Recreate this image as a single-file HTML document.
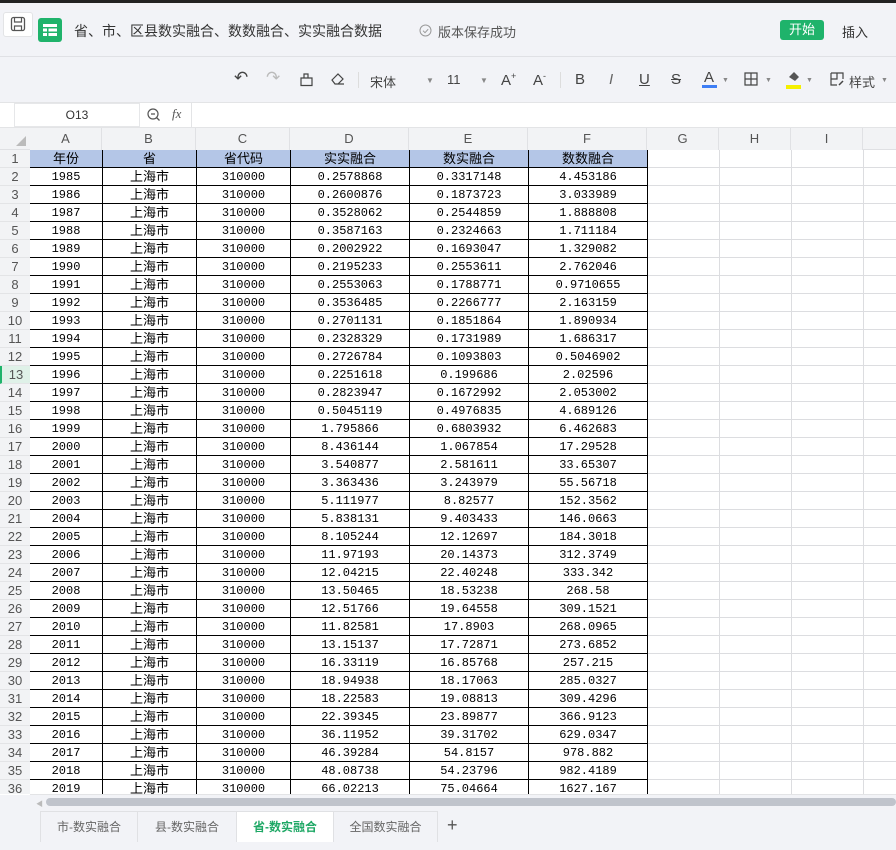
<!DOCTYPE html>
<html><head><meta charset="utf-8"><style>
*{margin:0;padding:0;box-sizing:border-box}
body{width:896px;height:850px;overflow:hidden;background:#f2f3f7;font-family:"Liberation Sans","Noto Sans CJK SC",sans-serif;position:relative;color:#333}
.abs{position:absolute}
.top{left:0;top:0;width:896px;height:3px;background:#222}
.tb{font-size:13px;color:#444}
table{border-collapse:collapse;table-layout:fixed;position:absolute;left:30px;top:150px;background:#fff;width:905px}
td{height:18px;max-height:18px;padding:0;text-align:center;font-family:"Liberation Mono","Noto Sans CJK SC",monospace;font-size:12px;color:#000;border:1px solid #dcdde0;white-space:nowrap;overflow:hidden;line-height:16px}
td.d{border:1px solid #000}
td.cn{font-family:"Liberation Sans","Noto Sans CJK SC",sans-serif;font-size:13px}
tr.h td.d{background:#b4c6e7;font-family:"Liberation Sans","Noto Sans CJK SC",sans-serif;font-size:13px}
.rh{position:absolute;left:0;width:30px;height:18px;font-size:13px;color:#555;text-align:center;line-height:18px;background:#f2f3f5;border-bottom:1px solid #e3e4e6}
.ch{position:absolute;top:128px;height:22px;font-size:13px;color:#555;text-align:center;line-height:22px;background:#f2f3f5;border-right:1px solid #e0e1e4}
.tab{position:absolute;top:812px;height:30px;font-size:12px;color:#666;line-height:30px;text-align:center;border-right:1px solid #e0e1e4;background:#f2f3f7}
</style></head><body>
<div class="abs top"></div>
<div class="abs" style="left:3px;top:12px;width:30px;height:25px;background:#fff;border:1px solid #e3e4e6;border-radius:3px"></div>
<svg class="abs" style="left:10px;top:16px" width="16" height="16" viewBox="0 0 16 16"><rect x="1.5" y="1.5" width="13" height="13" rx="2" fill="none" stroke="#555" stroke-width="1.3"/><path d="M4.5 2v4h7V2M4.5 14v-4h7v4" fill="none" stroke="#555" stroke-width="1.2"/></svg>
<div class="abs" style="left:38px;top:18px;width:24px;height:24px;background:#1fb36b;border-radius:3px"></div>
<svg class="abs" style="left:42px;top:22px" width="16" height="16" viewBox="0 0 16 16"><rect x="1" y="2" width="14" height="3" fill="#fff"/><rect x="1" y="6.5" width="4" height="3" fill="#fff"/><rect x="6.5" y="6.5" width="8.5" height="3" fill="#fff"/><rect x="1" y="11" width="4" height="3" fill="#fff"/><rect x="6.5" y="11" width="8.5" height="3" fill="#fff"/></svg>
<div class="abs" style="left:74px;top:21px;font-size:14px;color:#333">省、市、区县数实融合、数数融合、实实融合数据</div>
<svg class="abs" style="left:419px;top:24px" width="13" height="13"><circle cx="6.5" cy="6.5" r="5.5" fill="none" stroke="#999" stroke-width="1"/><path d="M4 6.7l2 2 3.2-3.5" fill="none" stroke="#999"/></svg>
<div class="abs" style="left:438px;top:22px;font-size:13px;color:#555">版本保存成功</div>
<div class="abs" style="left:780px;top:20px;width:44px;height:20px;background:#1fb36b;border-radius:3px;color:#fff;font-size:13px;text-align:center;line-height:20px">开始</div>
<div class="abs" style="left:842px;top:22px;font-size:13px;color:#333">插入</div>
<div class="abs" style="left:0;top:56px;width:896px;height:1px;background:#e0e1e5"></div>
<div class="abs tb" style="left:234px;top:68px;font-size:17px">↶</div>
<div class="abs tb" style="left:266px;top:68px;font-size:17px;color:#bbb">↷</div>
<svg class="abs" style="left:299px;top:72px" width="15" height="15"><path d="M2 13.5h11V6H2zM5 6V2h4v4" fill="none" stroke="#444" stroke-width="1.2"/></svg>
<svg class="abs" style="left:330px;top:71px" width="16" height="16"><path d="M2 9l6-6 5 5-5 5H5zM5 13h9" fill="none" stroke="#444" stroke-width="1.2"/></svg>
<div class="abs" style="left:358px;top:72px;width:1px;height:16px;background:#ddd"></div>
<div class="abs tb" style="left:370px;top:72px">宋体</div>
<div class="abs tb" style="left:426px;top:76px;font-size:8px;color:#888">▼</div>
<div class="abs tb" style="left:447px;top:72px">11</div>
<div class="abs tb" style="left:480px;top:76px;font-size:8px;color:#888">▼</div>
<div class="abs tb" style="left:501px;top:71px;font-size:15px">A<sup style="font-size:9px">+</sup></div>
<div class="abs tb" style="left:533px;top:71px;font-size:15px">A<sup style="font-size:9px">-</sup></div>
<div class="abs" style="left:560px;top:72px;width:1px;height:16px;background:#ddd"></div>
<div class="abs tb" style="left:575px;top:71px;font-size:15px">B</div>
<div class="abs tb" style="left:609px;top:71px;font-size:15px;font-style:italic;color:#666">I</div>
<div class="abs tb" style="left:639px;top:71px;font-size:15px;text-decoration:underline">U</div>
<div class="abs tb" style="left:671px;top:71px;font-size:15px;text-decoration:line-through">S</div>
<div class="abs tb" style="left:704px;top:69px;font-size:15px">A</div>
<div class="abs" style="left:702px;top:85px;width:15px;height:3px;background:#3d7ef5"></div>
<div class="abs tb" style="left:722px;top:77px;font-size:7px;color:#888">▼</div>
<svg class="abs" style="left:744px;top:72px" width="14" height="14"><path d="M1 1h12v12H1zM7 1v12M1 7h12" fill="none" stroke="#444" stroke-width="1.2"/></svg>
<div class="abs tb" style="left:765px;top:77px;font-size:7px;color:#888">▼</div>
<svg class="abs" style="left:786px;top:70px" width="15" height="14"><path d="M3 7l5-5 5 5-4 4z" fill="#555"/></svg>
<div class="abs" style="left:786px;top:85px;width:15px;height:4px;background:#f5f000"></div>
<div class="abs tb" style="left:806px;top:77px;font-size:7px;color:#888">▼</div>
<svg class="abs" style="left:830px;top:72px" width="14" height="14"><path d="M1 1h12v6M1 1v12h6M1 7h6V1" fill="none" stroke="#444" stroke-width="1.2"/><path d="M9 13l4-4" stroke="#444" stroke-width="1.5"/></svg>
<div class="abs tb" style="left:849px;top:72px">样式</div>
<div class="abs tb" style="left:881px;top:77px;font-size:7px;color:#888">▼</div>
<div class="abs" style="left:0;top:102px;width:896px;height:26px;background:#fff;border-top:1px solid #e3e4e6;border-bottom:1px solid #e3e4e6"></div>
<div class="abs" style="left:14px;top:103px;width:126px;height:24px;border:1px solid #e6e7e9;font-size:12px;color:#333;text-align:center;line-height:22px;background:#fff">O13</div>
<svg class="abs" style="left:146px;top:107px" width="16" height="16"><circle cx="7" cy="7" r="5" fill="none" stroke="#555" stroke-width="1.2"/><path d="M5 7h4M10.5 10.5l3 3" stroke="#555" stroke-width="1.3"/></svg>
<div class="abs" style="left:172px;top:106px;font-size:13px;font-style:italic;font-family:'Liberation Serif',serif;color:#555">fx</div>
<div class="abs" style="left:191px;top:103px;width:1px;height:24px;background:#e3e4e6"></div>
<div class="abs" style="left:0;top:128px;width:896px;height:22px;background:#f2f3f5;border-bottom:1px solid #dfe0e3"></div>
<svg class="abs" style="left:16px;top:136px" width="10" height="10"><path d="M10 0V10H0z" fill="#bbb"/></svg>
<div class="ch" style="left:30px;width:72px">A</div>
<div class="ch" style="left:102px;width:94px">B</div>
<div class="ch" style="left:196px;width:94px">C</div>
<div class="ch" style="left:290px;width:119px">D</div>
<div class="ch" style="left:409px;width:119px">E</div>
<div class="ch" style="left:528px;width:119px">F</div>
<div class="ch" style="left:647px;width:72px">G</div>
<div class="ch" style="left:719px;width:72px">H</div>
<div class="ch" style="left:791px;width:72px">I</div>
<div class="abs" style="left:0;top:150px;width:896px;height:645px;background:#fff"></div>
<div style="position:absolute;left:0;top:150px;width:896px;height:644px;overflow:hidden">
<table style="left:29px;top:-1px">
<colgroup><col style="width:73px"><col style="width:94px"><col style="width:94px"><col style="width:119px"><col style="width:119px"><col style="width:119px"><col style="width:72px"><col style="width:72px"><col style="width:72px"><col style="width:72px"></colgroup>
<tr class="h"><td class="d">年份</td><td class="d">省</td><td class="d">省代码</td><td class="d">实实融合</td><td class="d">数实融合</td><td class="d">数数融合</td><td></td><td></td><td></td><td></td></tr>
<tr><td class="d">1985</td><td class="d cn">上海市</td><td class="d">310000</td><td class="d">0.2578868</td><td class="d">0.3317148</td><td class="d">4.453186</td><td></td><td></td><td></td><td></td></tr>
<tr><td class="d">1986</td><td class="d cn">上海市</td><td class="d">310000</td><td class="d">0.2600876</td><td class="d">0.1873723</td><td class="d">3.033989</td><td></td><td></td><td></td><td></td></tr>
<tr><td class="d">1987</td><td class="d cn">上海市</td><td class="d">310000</td><td class="d">0.3528062</td><td class="d">0.2544859</td><td class="d">1.888808</td><td></td><td></td><td></td><td></td></tr>
<tr><td class="d">1988</td><td class="d cn">上海市</td><td class="d">310000</td><td class="d">0.3587163</td><td class="d">0.2324663</td><td class="d">1.711184</td><td></td><td></td><td></td><td></td></tr>
<tr><td class="d">1989</td><td class="d cn">上海市</td><td class="d">310000</td><td class="d">0.2002922</td><td class="d">0.1693047</td><td class="d">1.329082</td><td></td><td></td><td></td><td></td></tr>
<tr><td class="d">1990</td><td class="d cn">上海市</td><td class="d">310000</td><td class="d">0.2195233</td><td class="d">0.2553611</td><td class="d">2.762046</td><td></td><td></td><td></td><td></td></tr>
<tr><td class="d">1991</td><td class="d cn">上海市</td><td class="d">310000</td><td class="d">0.2553063</td><td class="d">0.1788771</td><td class="d">0.9710655</td><td></td><td></td><td></td><td></td></tr>
<tr><td class="d">1992</td><td class="d cn">上海市</td><td class="d">310000</td><td class="d">0.3536485</td><td class="d">0.2266777</td><td class="d">2.163159</td><td></td><td></td><td></td><td></td></tr>
<tr><td class="d">1993</td><td class="d cn">上海市</td><td class="d">310000</td><td class="d">0.2701131</td><td class="d">0.1851864</td><td class="d">1.890934</td><td></td><td></td><td></td><td></td></tr>
<tr><td class="d">1994</td><td class="d cn">上海市</td><td class="d">310000</td><td class="d">0.2328329</td><td class="d">0.1731989</td><td class="d">1.686317</td><td></td><td></td><td></td><td></td></tr>
<tr><td class="d">1995</td><td class="d cn">上海市</td><td class="d">310000</td><td class="d">0.2726784</td><td class="d">0.1093803</td><td class="d">0.5046902</td><td></td><td></td><td></td><td></td></tr>
<tr><td class="d">1996</td><td class="d cn">上海市</td><td class="d">310000</td><td class="d">0.2251618</td><td class="d">0.199686</td><td class="d">2.02596</td><td></td><td></td><td></td><td></td></tr>
<tr><td class="d">1997</td><td class="d cn">上海市</td><td class="d">310000</td><td class="d">0.2823947</td><td class="d">0.1672992</td><td class="d">2.053002</td><td></td><td></td><td></td><td></td></tr>
<tr><td class="d">1998</td><td class="d cn">上海市</td><td class="d">310000</td><td class="d">0.5045119</td><td class="d">0.4976835</td><td class="d">4.689126</td><td></td><td></td><td></td><td></td></tr>
<tr><td class="d">1999</td><td class="d cn">上海市</td><td class="d">310000</td><td class="d">1.795866</td><td class="d">0.6803932</td><td class="d">6.462683</td><td></td><td></td><td></td><td></td></tr>
<tr><td class="d">2000</td><td class="d cn">上海市</td><td class="d">310000</td><td class="d">8.436144</td><td class="d">1.067854</td><td class="d">17.29528</td><td></td><td></td><td></td><td></td></tr>
<tr><td class="d">2001</td><td class="d cn">上海市</td><td class="d">310000</td><td class="d">3.540877</td><td class="d">2.581611</td><td class="d">33.65307</td><td></td><td></td><td></td><td></td></tr>
<tr><td class="d">2002</td><td class="d cn">上海市</td><td class="d">310000</td><td class="d">3.363436</td><td class="d">3.243979</td><td class="d">55.56718</td><td></td><td></td><td></td><td></td></tr>
<tr><td class="d">2003</td><td class="d cn">上海市</td><td class="d">310000</td><td class="d">5.111977</td><td class="d">8.82577</td><td class="d">152.3562</td><td></td><td></td><td></td><td></td></tr>
<tr><td class="d">2004</td><td class="d cn">上海市</td><td class="d">310000</td><td class="d">5.838131</td><td class="d">9.403433</td><td class="d">146.0663</td><td></td><td></td><td></td><td></td></tr>
<tr><td class="d">2005</td><td class="d cn">上海市</td><td class="d">310000</td><td class="d">8.105244</td><td class="d">12.12697</td><td class="d">184.3018</td><td></td><td></td><td></td><td></td></tr>
<tr><td class="d">2006</td><td class="d cn">上海市</td><td class="d">310000</td><td class="d">11.97193</td><td class="d">20.14373</td><td class="d">312.3749</td><td></td><td></td><td></td><td></td></tr>
<tr><td class="d">2007</td><td class="d cn">上海市</td><td class="d">310000</td><td class="d">12.04215</td><td class="d">22.40248</td><td class="d">333.342</td><td></td><td></td><td></td><td></td></tr>
<tr><td class="d">2008</td><td class="d cn">上海市</td><td class="d">310000</td><td class="d">13.50465</td><td class="d">18.53238</td><td class="d">268.58</td><td></td><td></td><td></td><td></td></tr>
<tr><td class="d">2009</td><td class="d cn">上海市</td><td class="d">310000</td><td class="d">12.51766</td><td class="d">19.64558</td><td class="d">309.1521</td><td></td><td></td><td></td><td></td></tr>
<tr><td class="d">2010</td><td class="d cn">上海市</td><td class="d">310000</td><td class="d">11.82581</td><td class="d">17.8903</td><td class="d">268.0965</td><td></td><td></td><td></td><td></td></tr>
<tr><td class="d">2011</td><td class="d cn">上海市</td><td class="d">310000</td><td class="d">13.15137</td><td class="d">17.72871</td><td class="d">273.6852</td><td></td><td></td><td></td><td></td></tr>
<tr><td class="d">2012</td><td class="d cn">上海市</td><td class="d">310000</td><td class="d">16.33119</td><td class="d">16.85768</td><td class="d">257.215</td><td></td><td></td><td></td><td></td></tr>
<tr><td class="d">2013</td><td class="d cn">上海市</td><td class="d">310000</td><td class="d">18.94938</td><td class="d">18.17063</td><td class="d">285.0327</td><td></td><td></td><td></td><td></td></tr>
<tr><td class="d">2014</td><td class="d cn">上海市</td><td class="d">310000</td><td class="d">18.22583</td><td class="d">19.08813</td><td class="d">309.4296</td><td></td><td></td><td></td><td></td></tr>
<tr><td class="d">2015</td><td class="d cn">上海市</td><td class="d">310000</td><td class="d">22.39345</td><td class="d">23.89877</td><td class="d">366.9123</td><td></td><td></td><td></td><td></td></tr>
<tr><td class="d">2016</td><td class="d cn">上海市</td><td class="d">310000</td><td class="d">36.11952</td><td class="d">39.31702</td><td class="d">629.0347</td><td></td><td></td><td></td><td></td></tr>
<tr><td class="d">2017</td><td class="d cn">上海市</td><td class="d">310000</td><td class="d">46.39284</td><td class="d">54.8157</td><td class="d">978.882</td><td></td><td></td><td></td><td></td></tr>
<tr><td class="d">2018</td><td class="d cn">上海市</td><td class="d">310000</td><td class="d">48.08738</td><td class="d">54.23796</td><td class="d">982.4189</td><td></td><td></td><td></td><td></td></tr>
<tr><td class="d">2019</td><td class="d cn">上海市</td><td class="d">310000</td><td class="d">66.02213</td><td class="d">75.04664</td><td class="d">1627.167</td><td></td><td></td><td></td><td></td></tr>
</table>
<div class="rh" style="top:0">1</div><div class="rh" style="top:18px">2</div><div class="rh" style="top:36px">3</div><div class="rh" style="top:54px">4</div><div class="rh" style="top:72px">5</div><div class="rh" style="top:90px">6</div><div class="rh" style="top:108px">7</div><div class="rh" style="top:126px">8</div><div class="rh" style="top:144px">9</div><div class="rh" style="top:162px">10</div><div class="rh" style="top:180px">11</div><div class="rh" style="top:198px">12</div><div class="rh" style="top:216px;background:#dff1e8;border-left:2px solid #1fb36b">13</div><div class="rh" style="top:234px">14</div><div class="rh" style="top:252px">15</div><div class="rh" style="top:270px">16</div><div class="rh" style="top:288px">17</div><div class="rh" style="top:306px">18</div><div class="rh" style="top:324px">19</div><div class="rh" style="top:342px">20</div><div class="rh" style="top:360px">21</div><div class="rh" style="top:378px">22</div><div class="rh" style="top:396px">23</div><div class="rh" style="top:414px">24</div><div class="rh" style="top:432px">25</div><div class="rh" style="top:450px">26</div><div class="rh" style="top:468px">27</div><div class="rh" style="top:486px">28</div><div class="rh" style="top:504px">29</div><div class="rh" style="top:522px">30</div><div class="rh" style="top:540px">31</div><div class="rh" style="top:558px">32</div><div class="rh" style="top:576px">33</div><div class="rh" style="top:594px">34</div><div class="rh" style="top:612px">35</div><div class="rh" style="top:630px">36</div>
</div>
<div class="abs" style="left:30px;top:794px;width:866px;height:16px;background:#f2f3f7;border-top:1px solid #e3e4e6"></div>
<div class="abs" style="left:36px;top:799px;font-size:7px;color:#bbb">◀</div>
<div class="abs" style="left:46px;top:798px;width:850px;height:8px;background:#c0c4cc;border-radius:4px"></div>
<div class="abs" style="left:40px;top:811px;width:398px;height:31px;border:1px solid #e0e1e4;background:#f2f3f7"></div>
<div class="tab" style="left:41px;width:97px">市-数实融合</div>
<div class="tab" style="left:138px;width:99px">县-数实融合</div>
<div class="tab" style="left:237px;width:97px;background:#fff;color:#1fa866;font-weight:bold">省-数实融合</div>
<div class="tab" style="left:334px;width:104px">全国数实融合</div>
<div class="abs" style="left:447px;top:815px;font-size:18px;color:#555">+</div>
</body></html>
